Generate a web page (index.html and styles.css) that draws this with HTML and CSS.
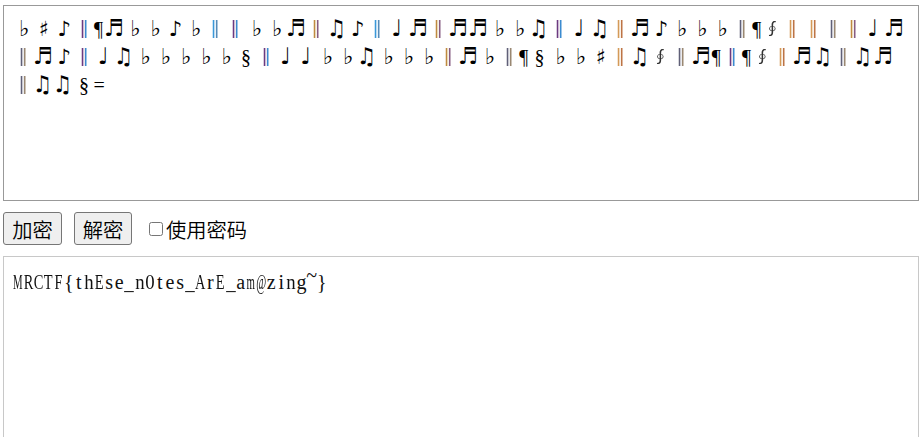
FILE: index.html
```html
<!DOCTYPE html>
<html lang="zh-CN">
<head>
<meta charset="utf-8">
<title>文本加密</title>
<link rel="stylesheet" href="styles.css">
</head>
<body>
<main class="page">
  <section class="box source">
    <div class="line notes" data-tones="ADACDCAEBEEBC">♭♯♪‖¶♬♭♭♪♭‖‖♭♭♬‖♫♪‖♩♬‖♬♬♭♭♫‖♩♫‖♬♪♭♭♭‖¶∮‖‖‖‖♩♬</div>
    <div class="line notes" data-tones="BAACBEBAEB">‖♬♪‖♩♫♭♭♭♭♭§‖♩♩♭♭♫♭♭♭‖♬♭‖¶§♭♭♯‖♫∮‖♬¶‖¶∮‖♬♫‖♫♬</div>
    <div class="line notes" data-tones="B">‖♫♫§=</div>
  </section>
  <div class="actions">
    <button type="button">加密</button>
    <button type="button">解密</button>
    <label class="check"><input type="checkbox"><span>使用密码</span></label>
  </div>
  <section class="box result">
    <div class="line mono">MRCTF{thEse_n0tes_ArE_am@zing~}</div>
  </section>
</main>
<script src="cells.js"></script>
</body>
</html>
```
FILE: styles.css
```css
* { box-sizing: border-box; }
body {
  margin: 0;
  background: #fff;
  color: #000;
}
.page {
  display: flex;
  flex-direction: column;
  height: 437px;
  padding: 5px 5px 0 3px;
}
.box { border: 1px solid #999; }
.source { flex: none; height: 196px; padding: 9px 0 0 9px; }
.result { flex: 1; border-color: #c8c8c8; border-bottom: 0; padding: 11px 0 0 9px; }
.line { display: flex; height: 28px; }
.cell {
  flex: none;
  display: flex;
  justify-content: center;
  width: 20.25px;
  height: 28px;
  line-height: 28px;
  font-family: "DejaVu Sans", sans-serif;
  font-size: 20px;
}
.cell i { font-style: normal; flex: none; }
.half { width: 10.12px; }
.flat i { font-size: 22px; transform: translate(1px, -.5px); }
.sharp i { font-size: 21px; transform: translateX(.5px); }
.eighth i { font-size: 21px; transform: translate(.5px, 0); }
.quarter i { font-size: 23px; transform: translate(-1px, -1px); }
.beam i, .beam2 i { font-size: 23px; transform: translate(-.5px, -1px) scaleX(.95); }
.bar i {
  font-size: 17px;
  transform: translateY(-1px) scaleX(1.15);
  color: transparent;
  background: linear-gradient(90deg, var(--left) 50%, var(--right) 50%);
  -webkit-background-clip: text;
  background-clip: text;
}
.tone-A { --left: #6c3a80; --right: #3b8bd0; }
.tone-B { --left: #606078; --right: #9a8872; }
.tone-C { --left: #bf8b3f; --right: #865b82; }
.tone-D { --left: #3b98d8; --right: #568bb8; }
.tone-E { --left: #d49a58; --right: #bd7445; }
.pilcrow i, .section i, .equals i { font-family: "Liberation Serif", serif; }
.pilcrow i { transform: translateX(-.5px); }
.contour i { font-family: "DejaVu Serif", serif; font-size: 15px; color: #333; transform: scaleX(1.25); }
.mono .cell { width: 10.13px; font-family: "Liberation Serif", serif; color: #111; }
.mono .wide i { transform: scaleX(.54); }
.mono .mid i { transform: scaleX(.72); }
.mono .low i { transform: scaleX(.94); }
.mono .tilde i { transform: translateY(-7px); }
.actions {
  flex: none;
  display: flex;
  align-items: center;
  margin: 11px 0;
  height: 33px;
  font: 20.3px/30px "Noto Sans CJK SC", sans-serif;
}
button {
  width: 59px;
  height: 33px;
  margin: 0 12px 0 0;
  padding: 0;
  border: 1px solid #767676;
  border-radius: 3px;
  background: #efefef;
  color: #000;
  font: 350 20.3px/30px "Noto Sans CJK SC", sans-serif;
}
button + button { width: 58px; margin-right: 17px; }
.check { display: flex; align-items: center; font-weight: 350; }
.check input {
  appearance: none;
  width: 14px;
  height: 14px;
  margin: 0 3px 0 0;
  border: 1px solid #767676;
  border-radius: 2.5px;
  background: #fff;
}
```
FILE: cells.js
```js
const kinds = {
  "♭": "flat", "♯": "sharp", "♪": "eighth", "♩": "quarter", "♫": "beam", "♬": "beam2",
  "‖": "bar", "¶": "pilcrow half", "§": "section", "∮": "contour", "=": "equals half"
};
// Put each character in a fixed-pitch cell.
document.querySelectorAll(".line").forEach(line => {
  const mono = line.classList.contains("mono");
  const chars = [...line.textContent];
  const tones = line.dataset.tones || "";
  let bars = 0;
  line.textContent = "";
  chars.forEach(c => {
    const cell = document.createElement("span");
    let kind = mono
      ? ("M@m".includes(c) ? "wide" : "RCEATF".includes(c) ? "mid" : c === "~" ? "tilde" : "hn0_".includes(c) ? "low" : "")
      : kinds[c];
    if (c === "‖") kind += " tone-" + (tones[bars++] || "B");
    cell.className = ("cell " + kind).trim();
    const glyph = document.createElement("i");
    glyph.textContent = c;
    cell.append(glyph);
    line.append(cell);
  });
});
```
